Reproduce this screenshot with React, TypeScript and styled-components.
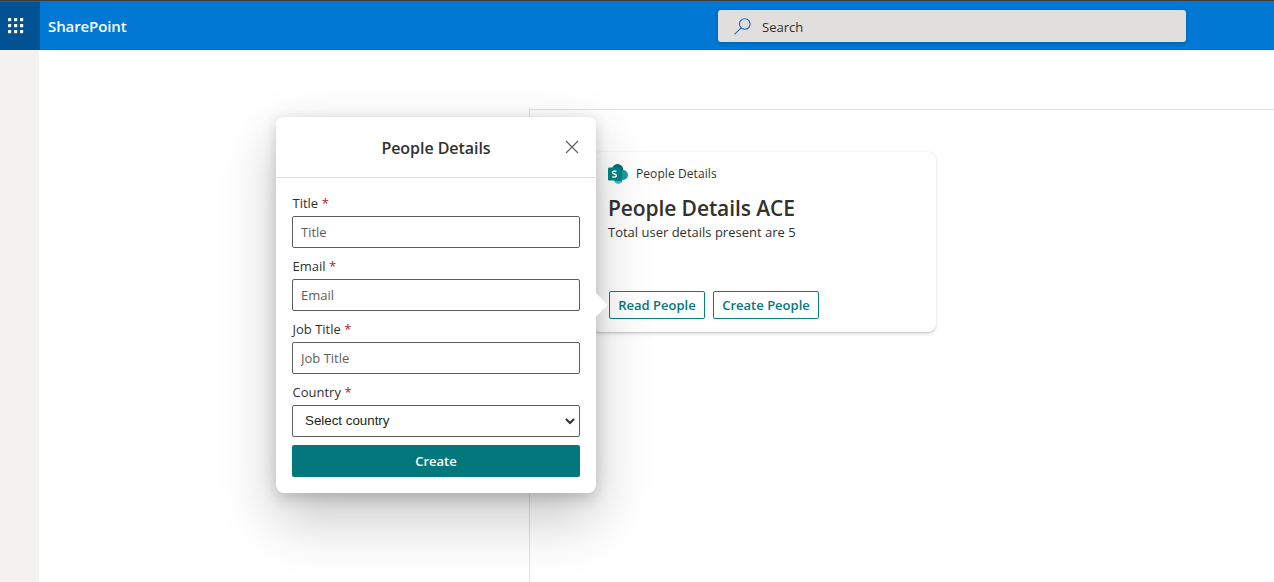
import React from 'react';
import styled, { createGlobalStyle } from 'styled-components';

const GlobalStyle = createGlobalStyle`
  * { box-sizing: border-box; }
  html, body { margin: 0; padding: 0; }
  body {
    width: 1274px;
    height: 582px;
    overflow: hidden;
    background: #fff;
    color: #323130;
    font-family: 'Open Sans', 'Noto Sans', sans-serif;
  }
  button, input { font-family: inherit; }
`;

const Page = styled.div`
  position: relative;
  display: flex;
  flex-direction: column;
  width: 1274px;
  height: 582px;
  overflow: hidden;
`;

const SuiteBar = styled.header`
  display: flex;
  flex: none;
  height: 50px;
  border-top: 1px solid #3b3b3b;
  background: #0078d4;
  box-shadow: inset 0 1px 0 #4d6579;
`;

const Launcher = styled.button`
  display: flex;
  align-items: center;
  width: 40px;
  height: 49px;
  padding: 0 0 0 8px;
  border: 0;
  background: #005292;
  box-shadow: inset 0 1px 0 #4b5a66;
`;

const Brand = styled.div`
  width: 678px;
  padding-left: 8px;
  color: #fff;
  font-size: 15px;
  font-weight: 600;
  line-height: 50px;
  letter-spacing: -0.1px;
`;

const SearchBox = styled.div`
  display: flex;
  align-items: center;
  width: 468px;
  height: 32px;
  margin-top: 9px;
  padding-left: 16px;
  border-radius: 3px;
  background: #e1dfdd;
  box-shadow: 0 1px 4px rgba(0, 0, 0, 0.22);
  color: #323130;
  font-size: 13px;

  svg { margin-right: 11px; }
  span { padding-top: 2px; }
`;

const Body = styled.div`
  display: flex;
  flex: 1;
`;

const AppRail = styled.nav`
  width: 39px;
  margin-right: 490px;
  background: #f3f2f1;
`;

const Canvas = styled.main`
  flex: 1;
  margin-top: 59px;
  padding: 42px 0 0 62px;
  border: 1px solid #e1e1e1;
  border-width: 1px 0 0 1px;
`;

const Card = styled.article`
  display: flex;
  flex-direction: column;
  width: 344px;
  height: 180px;
  padding: 11px 16px 13px;
  border-radius: 8px;
  background: #fff;
  box-shadow: 0 1.6px 3.6px rgba(0, 0, 0, 0.13), 0 0.3px 0.9px rgba(0, 0, 0, 0.11);
`;

const CardHeader = styled.div`
  display: flex;
  align-items: center;
  gap: 8px;
  height: 22px;
  font-size: 12px;
  letter-spacing: 0.08px;

  span { padding-bottom: 2px; }
`;

const CardTitle = styled.h2`
  margin: 8px 0 0;
  font-size: 21px;
  font-weight: 600;
  line-height: 30px;
  letter-spacing: -0.1px;
`;

const CardText = styled.p`
  margin: 0;
  font-size: 13px;
  line-height: 18px;
`;

const CardActions = styled.div`
  display: flex;
  gap: 8px;
  margin: auto 0 0 1px;
`;

const OutlineButton = styled.button<{ $width: number }>`
  width: ${(p) => p.$width}px;
  height: 28px;
  padding: 0;
  border: 1px solid #038387;
  border-radius: 2px;
  background: transparent;
  color: #03787c;
  font-size: 13px;
  font-weight: 600;
  white-space: nowrap;
`;

const Callout = styled.section`
  position: absolute;
  left: 276px;
  top: 117px;
  width: 320px;
  height: 376px;
  border-radius: 8px;
  background: #fff;
  box-shadow: 0 25.6px 57.6px rgba(0, 0, 0, 0.22), 0 4.8px 14.4px rgba(0, 0, 0, 0.18);
`;

const Beak = styled.svg`
  position: absolute;
  left: 320px;
  top: 176px;
`;

const CalloutHeader = styled.div`
  display: grid;
  grid-template-columns: 48px 1fr 48px;
  align-items: center;
  justify-items: center;
  height: 61px;
  border-bottom: 1px solid #e3e3e3;
`;

const CalloutTitle = styled.h1`
  margin: 0;
  padding-top: 2px;
  font-size: 16px;
  font-weight: 600;
  line-height: 24px;
  letter-spacing: -0.05px;
`;

const CloseButton = styled.button`
  display: flex;
  padding: 0;
  border: 0;
  background: none;
`;

const Form = styled.form`
  display: flex;
  flex-direction: column;
  padding: 15px 16px 0;
`;

const Field = styled.label`
  display: flex;
  flex-direction: column;
  height: 63px;
  font-size: 13px;
`;

const FieldName = styled.span`
  height: 23px;
  padding-left: 0.5px;
  line-height: 20px;
`;

const Required = styled.span`
  margin-left: 3.5px;
  color: #a4262c;
`;

const TextInput = styled.input`
  height: 32px;
  padding: 0 8px;
  border: 1px solid #605e5c;
  border-radius: 2px;
  outline: 0;
  font-size: 13px;

  &::placeholder { color: #605e5c; opacity: 1; }
`;

const Select = styled.div`
  display: flex;
  align-items: center;
  justify-content: space-between;
  height: 32px;
  padding: 0 3px 1px 12px;
  border: 1px solid #605e5c;
  border-radius: 2px;
  color: #201f1e;
  font: 13.33px 'Liberation Sans', Arial, sans-serif;
`;

const PrimaryButton = styled.button`
  height: 32px;
  padding: 0;
  border: 0;
  border-radius: 2px;
  background: #03787c;
  color: #fff;
  font-size: 13px;
  font-weight: 600;
`;

const WaffleIcon = () => (
  <svg width="16" height="16" fill="#fff">
    {[0, 6, 12].map((y) => [0, 6, 12].map((x) => (
      <rect key={`${x}-${y}`} x={x} y={y} width="3.2" height="3.2" rx="0.6" />
    )))}
  </svg>
);

const SearchIcon = () => (
  <svg width="17" height="17" fill="none" stroke="#2468b4" strokeWidth="1.1">
    <circle cx="10.8" cy="6" r="5.3" />
    <path d="M7 9.8.5 16.3" />
  </svg>
);

const CloseIcon = () => (
  <svg width="14" height="14" fill="none" stroke="#605e5c" strokeWidth="1.1">
    <path d="M1 1l12 12M13 1L1 13" />
  </svg>
);

const SharePointIcon = () => (
  <svg width="20" height="20" viewBox="0 0 20 20">
    <circle cx="9.6" cy="5.6" r="5.6" fill="#036c70" />
    <circle cx="14.9" cy="11" r="5.1" fill="#1a9ba1" />
    <circle cx="10.3" cy="15.8" r="4.1" fill="#37c6d0" />
    <path d="M5 4.2h7.5a1.6 1.6 0 0 1 1.6 1.6v11.5H6.5z" fill="#024e52" opacity=".55" />
    <rect y="3.5" width="13" height="13" rx="1.2" fill="#038387" />
    <path
      d="M8.4 7.5C6.8 6.7 4.5 7 4.5 8.4c0 1.9 3.9 1.3 3.9 3.2 0 1.7-2.5 1.8-4.1 1"
      fill="none"
      stroke="#fff"
      strokeWidth="1.4"
    />
  </svg>
);

const ChevronIcon = () => (
  <svg width="12" height="8" fill="none" stroke="#323130" strokeWidth="2">
    <path d="M2 2l4 4 4-4" />
  </svg>
);

const textFields = ['Title', 'Email', 'Job Title'];

export default function App() {
  return (
    <Page>
      <GlobalStyle />
      <SuiteBar>
        <Launcher aria-label="App launcher"><WaffleIcon /></Launcher>
        <Brand>SharePoint</Brand>
        <SearchBox><SearchIcon /><span>Search</span></SearchBox>
      </SuiteBar>
      <Body>
        <AppRail />
        <Canvas>
          <Card>
            <CardHeader><SharePointIcon /><span>People Details</span></CardHeader>
            <CardTitle>People Details ACE</CardTitle>
            <CardText>Total user details present are 5</CardText>
            <CardActions>
              <OutlineButton $width={96}>Read People</OutlineButton>
              <OutlineButton $width={106}>Create People</OutlineButton>
            </CardActions>
          </Card>
        </Canvas>
      </Body>
      <Callout>
        <Beak width="12" height="24"><path d="M0 0l11.5 12L0 24z" fill="#fff" /></Beak>
        <CalloutHeader>
          <span />
          <CalloutTitle>People Details</CalloutTitle>
          <CloseButton aria-label="Close"><CloseIcon /></CloseButton>
        </CalloutHeader>
        <Form>
          {textFields.map((name) => (
            <Field key={name}>
              <FieldName>{name}<Required>*</Required></FieldName>
              <TextInput placeholder={name} />
            </Field>
          ))}
          <Field>
            <FieldName>Country<Required>*</Required></FieldName>
            <Select>Select country<ChevronIcon /></Select>
          </Field>
          <PrimaryButton type="button">Create</PrimaryButton>
        </Form>
      </Callout>
    </Page>
  );
}
